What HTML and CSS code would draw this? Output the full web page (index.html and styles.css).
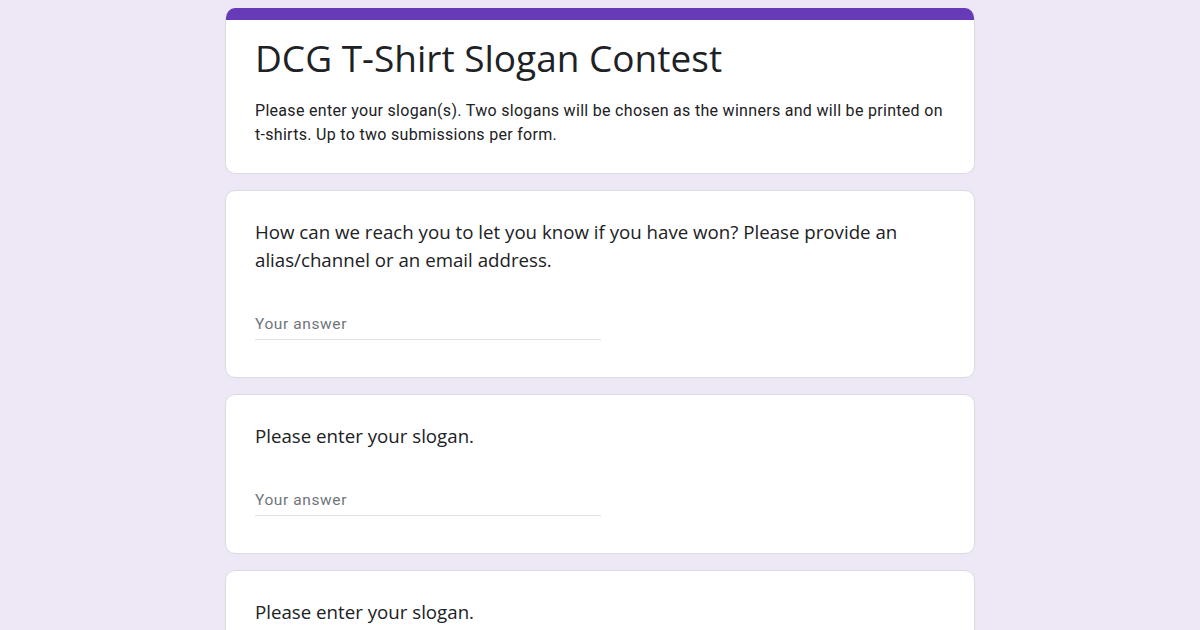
FILE: index.html
```html
<!DOCTYPE html>
<html>
<head>
<meta charset="utf-8">
<link rel="stylesheet" href="styles.css">
</head>
<body>
<main class="form">
  <section class="card header-card">
    <div class="accent"></div>
    <div class="header-body">
      <h1 class="title">DCG T-Shirt Slogan Contest</h1>
      <p class="desc">Please enter your slogan(s). Two slogans will be chosen as the winners and will be printed on t-shirts. Up to two submissions per form.</p>
    </div>
  </section>
  <section class="card question">
    <div class="q-text">How can we reach you to let you know if you have won? Please provide an alias/channel or an email address.</div>
    <div class="answer"><span class="placeholder">Your answer</span></div>
  </section>
  <section class="card question">
    <div class="q-text">Please enter your slogan.</div>
    <div class="answer"><span class="placeholder">Your answer</span></div>
  </section>
  <section class="card question">
    <div class="q-text">Please enter your slogan.</div>
    <div class="answer"><span class="placeholder">Your answer</span></div>
  </section>
</main>
</body>
</html>
```
FILE: styles.css
```css
html, body {
  margin: 0;
  padding: 0;
}
body {
  background: #ede7f6;
  color: #202124;
  font-family: Roboto, "Liberation Sans", sans-serif;
  overflow: hidden;
  height: 630px;
}
.form {
  width: 750px;
  margin: 0 auto;
  padding-top: 8px;
  display: flex;
  flex-direction: column;
  gap: 16px;
}
.card {
  background: #fff;
  border: 1px solid #dadce0;
  border-radius: 10px;
  overflow: hidden;
}
.header-card {
  border-top: none;
}
.accent {
  height: 12px;
  background: #673ab7;
}
.header-body {
  padding: 14px 26px 26px 29px;
}
.title {
  margin: 0;
  font-family: "Open Sans", sans-serif;
  font-weight: 400;
  font-size: 37px;
  line-height: 48px;
  letter-spacing: 0;
}
.desc {
  margin: 17px 0 0 0;
  font-size: 16px;
  line-height: 24px;
  letter-spacing: 0.3px;
}
.question {
  padding: 27px 29px 37px 29px;
}
.q-text {
  font-family: "Open Sans", sans-serif;
  font-size: 18.7px;
  line-height: 28px;
}
.answer {
  margin-top: 34px;
  width: 346px;
  height: 31px;
  border-bottom: 1px solid #e0e0e0;
  display: flex;
  align-items: center;
}
.placeholder {
  font-size: 15.5px;
  color: #70757a;
  letter-spacing: 0.6px;
}
```
